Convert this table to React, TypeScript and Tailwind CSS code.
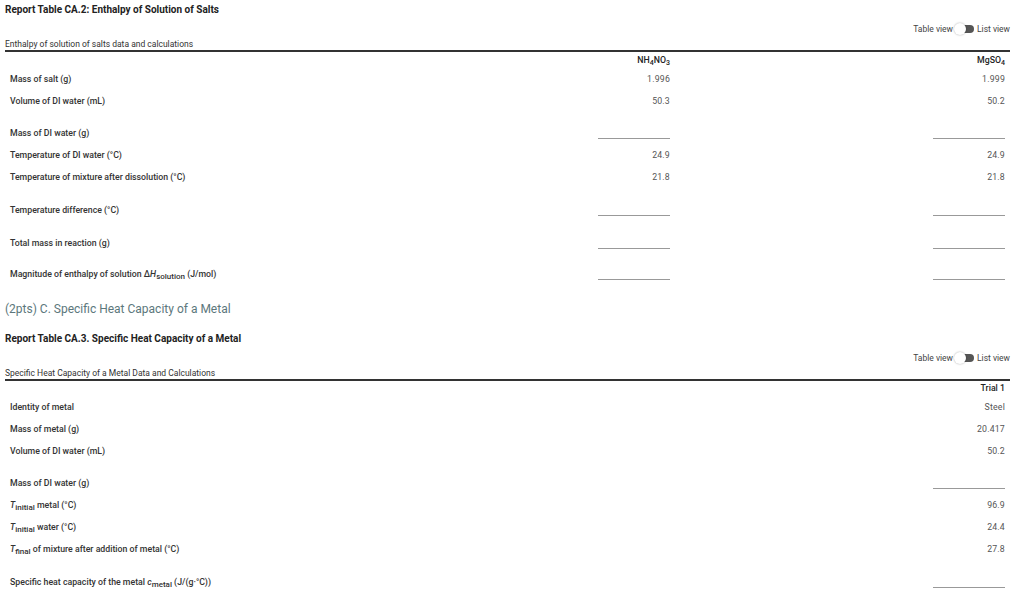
import React from "react";

type Row = {
  label: React.ReactNode;
  values: (string | null)[];
  h: string;
  blank?: boolean;
};

function Toggle() {
  return (
    <div className="flex items-center justify-end h-[20px] text-[8.5px] text-[#444]">
      <span>Table view</span>
      <span className="relative mx-[1px] w-[22px] h-[12px] flex items-center">
        <span className="absolute right-[2px] w-[16px] h-[8px] rounded-full bg-[#555]" />
        <span className="absolute left-0 w-[12px] h-[12px] rounded-full bg-white shadow-[0_0_2px_rgba(0,0,0,0.35)]" />
      </span>
      <span>List view</span>
    </div>
  );
}

function Blank() {
  return <div className="h-[10px] w-[72px] border-b border-[#999]" />;
}

function DataTable({
  caption,
  header,
  rows,
  cols,
  headerH,
}: {
  caption: string;
  header: React.ReactNode[];
  rows: Row[];
  cols: string;
  headerH: string;
}) {
  return (
    <div className="text-[8.75px]">
      <div className="border-b-2 border-[#333] h-[13px] flex items-center text-[8.5px] text-[#333]">{caption}</div>
      <div className={`grid ${cols} ${headerH} items-center font-medium text-[#222]`}>
        <div />
        {header.map((h, i) => (
          <div key={i} className="text-right px-[5px]">{h}</div>
        ))}
      </div>
      {rows.map((r, i) => (
        <div key={i} className={`grid ${cols} ${r.h} ${r.blank ? "pt-[10px]" : ""}`}>
          <div className="flex items-center px-[5px] font-medium text-[#333]">{r.label}</div>
          {r.values.map((v, j) => (
            <div key={j} className="flex items-center justify-end px-[5px] text-[#555] tracking-[0.2px]">
              {v === null ? <Blank /> : v}
            </div>
          ))}
        </div>
      ))}
    </div>
  );
}

export default function App() {
  const rows1: Row[] = [
    { label: "Mass of salt (g)", values: ["1.996", "1.999"], h: "h-[22px]" },
    { label: "Volume of DI water (mL)", values: ["50.3", "50.2"], h: "h-[22px]" },
    { label: "Mass of DI water (g)", values: [null, null], h: "h-[32px]", blank: true },
    { label: "Temperature of DI water (°C)", values: ["24.9", "24.9"], h: "h-[22px]" },
    { label: "Temperature of mixture after dissolution (°C)", values: ["21.8", "21.8"], h: "h-[22px]" },
    { label: "Temperature difference (°C)", values: [null, null], h: "h-[34px]", blank: true },
    { label: "Total mass in reaction (g)", values: [null, null], h: "h-[32px]", blank: true },
    {
      label: (
        <span>
          Magnitude of enthalpy of solution Δ<i>H</i>
          <sub className="text-[8px]">solution</sub> (J/mol)
        </span>
      ),
      values: [null, null],
      h: "h-[30px]",
      blank: true,
    },
  ];

  const rows2: Row[] = [
    { label: "Identity of metal", values: ["Steel"], h: "h-[22px]" },
    { label: "Mass of metal (g)", values: ["20.417"], h: "h-[22px]" },
    { label: "Volume of DI water (mL)", values: ["50.2"], h: "h-[22px]" },
    { label: "Mass of DI water (g)", values: [null], h: "h-[32px]", blank: true },
    {
      label: (
        <span>
          <i>T</i>
          <sub className="text-[8px]">initial</sub> metal (°C)
        </span>
      ),
      values: ["96.9"],
      h: "h-[22px]",
    },
    {
      label: (
        <span>
          <i>T</i>
          <sub className="text-[8px]">initial</sub> water (°C)
        </span>
      ),
      values: ["24.4"],
      h: "h-[22px]",
    },
    {
      label: (
        <span>
          <i>T</i>
          <sub className="text-[8px]">final</sub> of mixture after addition of metal (°C)
        </span>
      ),
      values: ["27.8"],
      h: "h-[22px]",
    },
    {
      label: (
        <span>
          Specific heat capacity of the metal <i>c</i>
          <sub className="text-[8px]">metal</sub> (J/(g·°C))
        </span>
      ),
      values: [null],
      h: "h-[34px]",
      blank: true,
    },
  ];

  return (
    <div className="w-[1024px] h-[601px] overflow-hidden bg-white px-[5px] pr-[14px] font-['Roboto',sans-serif]">
      <div className="h-[19px] flex items-center text-[10px] font-bold text-[#222]">Report Table CA.2: Enthalpy of Solution of Salts</div>
      <Toggle />
      <DataTable
        caption="Enthalpy of solution of salts data and calculations"
        header={[
          <span>
            NH<sub className="text-[7px]">4</sub>NO<sub className="text-[7px]">3</sub>
          </span>,
          <span>
            MgSO<sub className="text-[7px]">4</sub>
          </span>,
        ]}
        rows={rows1}
        cols="grid-cols-3"
        headerH="h-[17px]"
      />
      <div className="h-[48px] flex items-center text-[12px] text-[#5c777c]">(2pts) C. Specific Heat Capacity of a Metal</div>
      <div className="h-[11px] flex items-center text-[10px] font-bold text-[#222]">Report Table CA.3. Specific Heat Capacity of a Metal</div>
      <div className="h-[4px]" />
      <Toggle />
      <DataTable
        caption="Specific Heat Capacity of a Metal Data and Calculations"
        header={["Trial 1"]}
        rows={rows2}
        cols="grid-cols-[1fr_335px]"
        headerH="h-[16px]"
      />
    </div>
  );
}
